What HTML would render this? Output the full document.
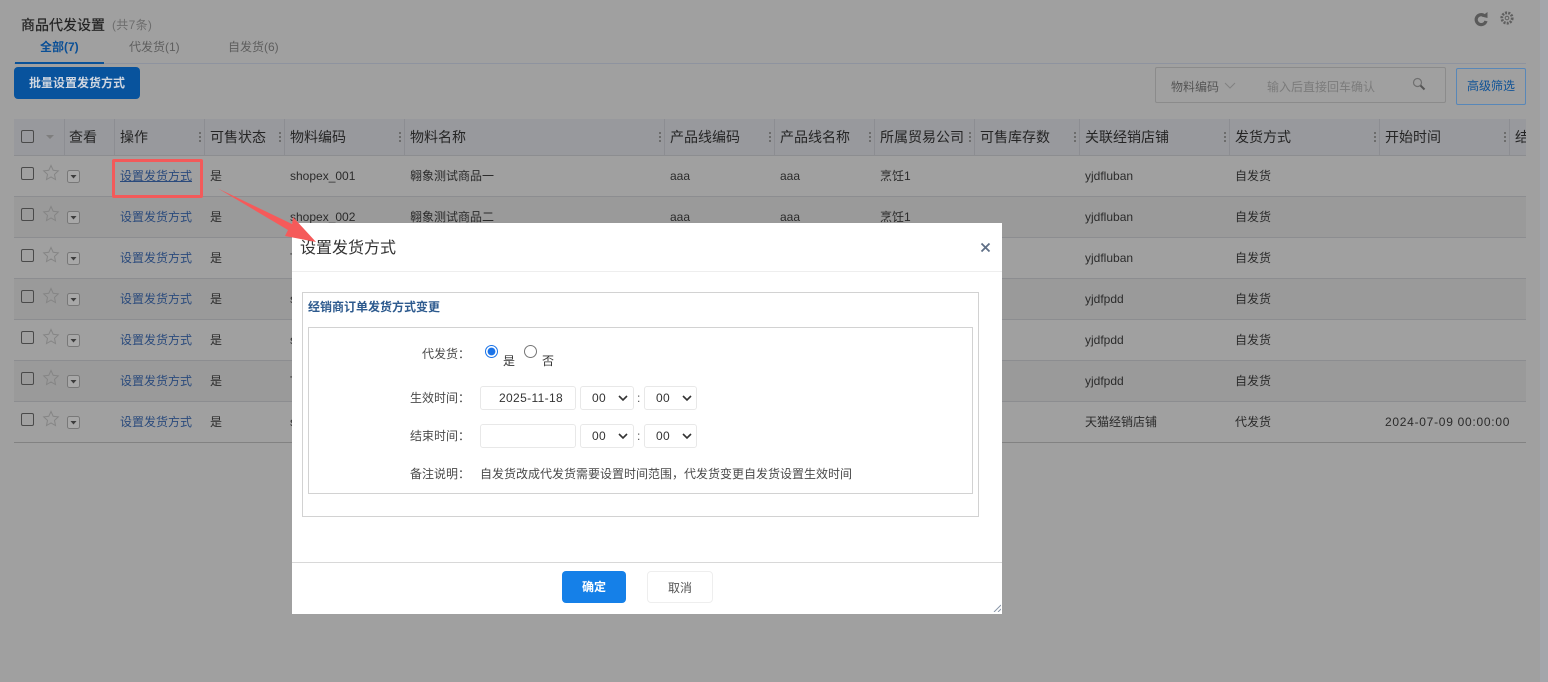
<!DOCTYPE html>
<html lang="zh">
<head>
<meta charset="utf-8">
<title>商品代发设置</title>
<style>
html,body{margin:0;padding:0}
body{width:1548px;height:682px;overflow:hidden;position:relative;background:#a0a0a0;font-family:"Liberation Sans","Noto Sans CJK SC",sans-serif;font-size:12px;color:#2b2b2b}
.a{position:absolute;white-space:nowrap}
.row{position:absolute;left:14px;width:1512px;height:40px;border-bottom:1px solid #8c8d90;line-height:41px;overflow:hidden}
.row.e{background:#9a9a9a}
.row span{position:absolute;top:0;white-space:nowrap}
.row .l{left:106px;color:#2a4a7c}
.row .s{left:196px}.row .c{left:276px}.row .n{left:396px}.row .p1{left:656px}.row .p2{left:766px}.row .t{left:866px}.row .d{left:1071px}.row .m{left:1221px}
.row i.cb{position:absolute;left:7px;top:11px;width:11px;height:11px;border:1px solid #4a4a4a;border-radius:2px}
.row svg{position:absolute}
.th{position:absolute;top:119px;height:36px;line-height:36px;font-size:14px;color:#252525;white-space:nowrap}
.sep{position:absolute;top:119px;width:1px;height:36px;background:#8c8d92}
.dots{position:absolute;top:132px;width:2px;height:2px;background:#6c6c6c;box-shadow:0 4px 0 #6c6c6c,0 8px 0 #6c6c6c}
.lab{position:absolute;right:532px;white-space:nowrap;color:#4a4a4a}
.inp{position:absolute;box-sizing:border-box;height:24px;border:1px solid #e8e8e8;border-radius:3px;background:#fff;color:#333;line-height:22px;font-size:12px}
.arrowd{position:absolute}
</style>
</head>
<body>
<div class="a" style="left:1540px;top:0;width:8px;height:682px;background:#a4a6ab"></div>

<div class="a" style="left:21px;top:15px;font-size:14px;color:#222;-webkit-text-stroke:.2px #222">商品代发设置</div>
<div class="a" style="left:112px;top:16px;color:#6d6d6d;letter-spacing:.3px">(共7条)</div>
<div class="a" style="left:40px;top:38px;color:#0a4f96;font-weight:bold">全部(7)</div>
<div class="a" style="left:129px;top:38px;color:#5e5e5e">代发货(1)</div>
<div class="a" style="left:228px;top:38px;color:#5e5e5e">自发货(6)</div>
<div class="a" style="left:14px;top:63px;width:1512px;height:1px;background:#8e939f"></div>
<div class="a" style="left:15px;top:62px;width:89px;height:2px;background:#0a5299"></div>

<svg class="a" style="left:1472px;top:10px" width="18" height="18" viewBox="0 0 18 18"><path d="M12 5.500A5 5 0 1 0 14 11" fill="none" stroke="#5a5a5a" stroke-width="3.200"/><path d="M9.500 6.500L15.500 2V8z" fill="#5a5a5a"/></svg>
<svg class="a" style="left:1499px;top:10px" width="16" height="16" viewBox="0 0 16 16"><circle cx="8" cy="8" r="5.200" fill="none" stroke="#5f5f5f" stroke-width="2.800" stroke-dasharray="2 1.200"/><circle cx="8" cy="8" r="1.800" fill="none" stroke="#5f5f5f"/></svg>

<div class="a" style="left:14px;top:67px;width:126px;height:32px;background:#08539d;border-radius:4px;color:#cfd6e0;text-align:center;line-height:32px;font-weight:bold">批量设置发货方式</div>

<div class="a" style="left:1155px;top:67px;width:289px;height:34px;border:1px solid #8b8b8b;border-radius:2px"></div>
<div class="a" style="left:1171px;top:78px;color:#555">物料编码</div>
<svg class="a" style="left:1224px;top:82px" width="12" height="8" viewBox="0 0 12 8"><path d="M1 1l5 5 5-5" fill="none" stroke="#818181"/></svg>
<div class="a" style="left:1267px;top:78px;color:#7b7b7b">输入后直接回车确认</div>
<svg class="a" style="left:1412px;top:77px" width="14" height="14" viewBox="0 0 14 14"><circle cx="5.500" cy="5.500" r="4" fill="none" stroke="#6f6f6f" stroke-width="1.200"/><path d="M8.500 8.500l4 4" stroke="#555" stroke-width="2"/></svg>
<div class="a" style="left:1456px;top:68px;width:68px;height:35px;border:1px solid #5887b8;border-radius:2px;color:#0f5296;text-align:center;line-height:35px">高级筛选</div>

<div class="a" style="left:14px;top:119px;width:1512px;height:36px;background:#98999d;border-bottom:1px solid #8c8d90;box-sizing:content-box"></div>
<i class="a" style="left:21px;top:130px;width:11px;height:11px;border:1px solid #4a4a4a;border-radius:2px"></i>
<svg class="a" style="left:45px;top:134px" width="10" height="6"><path d="M1 1h8l-4 4z" fill="#7e7e7e"/></svg>
<div class="sep" style="left:64px"></div><div class="sep" style="left:114px"></div><div class="sep" style="left:204px"></div><div class="sep" style="left:284px"></div><div class="sep" style="left:404px"></div><div class="sep" style="left:664px"></div><div class="sep" style="left:774px"></div><div class="sep" style="left:874px"></div><div class="sep" style="left:974px"></div><div class="sep" style="left:1079px"></div><div class="sep" style="left:1229px"></div><div class="sep" style="left:1379px"></div><div class="sep" style="left:1509px"></div>
<div class="dots" style="left:199px"></div><div class="dots" style="left:279px"></div><div class="dots" style="left:399px"></div><div class="dots" style="left:659px"></div><div class="dots" style="left:769px"></div><div class="dots" style="left:869px"></div><div class="dots" style="left:969px"></div><div class="dots" style="left:1074px"></div><div class="dots" style="left:1224px"></div><div class="dots" style="left:1374px"></div><div class="dots" style="left:1504px"></div>
<div class="th" style="left:69px">查看</div>
<div class="th" style="left:120px">操作</div>
<div class="th" style="left:210px">可售状态</div>
<div class="th" style="left:290px">物料编码</div>
<div class="th" style="left:410px">物料名称</div>
<div class="th" style="left:670px">产品线编码</div>
<div class="th" style="left:780px">产品线名称</div>
<div class="th" style="left:880px">所属贸易公司</div>
<div class="th" style="left:980px">可售库存数</div>
<div class="th" style="left:1085px">关联经销店铺</div>
<div class="th" style="left:1235px">发货方式</div>
<div class="th" style="left:1385px">开始时间</div>
<div class="th" style="left:1515px;width:11px;overflow:hidden">结束时间</div>

<div class="row" style="top:156px"><i class="cb"></i><svg style="left:28px;top:8px" width="18" height="18" viewBox="0 0 18 18"><path d="M9 1.500l2.200 4.800 5.100.6-3.800 3.500 1 5.100L9 13l-4.500 2.500 1-5.100L1.700 6.900l5.100-.6z" fill="none" stroke="#858585"/></svg><svg style="left:53px;top:14px" width="14" height="14"><rect x=".5" y=".5" width="12" height="12" rx="2" fill="#a8a8a8" stroke="#787878"/><path d="M3.500 5h6l-3 3.500z" fill="#3d3d3d"/></svg><span class="l" style="text-decoration:underline">设置发货方式</span><span class="s">是</span><span class="c">shopex_001</span><span class="n">翱象测试商品一</span><span class="p1">aaa</span><span class="p2">aaa</span><span class="t">烹饪1</span><span class="d">yjdfluban</span><span class="m">自发货</span></div>
<div class="row e" style="top:197px"><i class="cb"></i><svg style="left:28px;top:8px" width="18" height="18" viewBox="0 0 18 18"><path d="M9 1.500l2.200 4.800 5.100.6-3.800 3.500 1 5.100L9 13l-4.500 2.500 1-5.100L1.700 6.900l5.100-.6z" fill="none" stroke="#858585"/></svg><svg style="left:53px;top:14px" width="14" height="14"><rect x=".5" y=".5" width="12" height="12" rx="2" fill="#a8a8a8" stroke="#787878"/><path d="M3.500 5h6l-3 3.500z" fill="#3d3d3d"/></svg><span class="l">设置发货方式</span><span class="s">是</span><span class="c">shopex_002</span><span class="n">翱象测试商品二</span><span class="p1">aaa</span><span class="p2">aaa</span><span class="t">烹饪1</span><span class="d">yjdfluban</span><span class="m">自发货</span></div>
<div class="row" style="top:238px"><i class="cb"></i><svg style="left:28px;top:8px" width="18" height="18" viewBox="0 0 18 18"><path d="M9 1.500l2.200 4.800 5.100.6-3.800 3.500 1 5.100L9 13l-4.500 2.500 1-5.100L1.700 6.900l5.100-.6z" fill="none" stroke="#858585"/></svg><svg style="left:53px;top:14px" width="14" height="14"><rect x=".5" y=".5" width="12" height="12" rx="2" fill="#a8a8a8" stroke="#787878"/><path d="M3.500 5h6l-3 3.500z" fill="#3d3d3d"/></svg><span class="l">设置发货方式</span><span class="s">是</span><span class="c">T</span><span class="d">yjdfluban</span><span class="m">自发货</span></div>
<div class="row e" style="top:279px"><i class="cb"></i><svg style="left:28px;top:8px" width="18" height="18" viewBox="0 0 18 18"><path d="M9 1.500l2.200 4.800 5.100.6-3.800 3.500 1 5.100L9 13l-4.500 2.500 1-5.100L1.700 6.900l5.100-.6z" fill="none" stroke="#858585"/></svg><svg style="left:53px;top:14px" width="14" height="14"><rect x=".5" y=".5" width="12" height="12" rx="2" fill="#a8a8a8" stroke="#787878"/><path d="M3.500 5h6l-3 3.500z" fill="#3d3d3d"/></svg><span class="l">设置发货方式</span><span class="s">是</span><span class="c">s</span><span class="d">yjdfpdd</span><span class="m">自发货</span></div>
<div class="row" style="top:320px"><i class="cb"></i><svg style="left:28px;top:8px" width="18" height="18" viewBox="0 0 18 18"><path d="M9 1.500l2.200 4.800 5.100.6-3.800 3.500 1 5.100L9 13l-4.500 2.500 1-5.100L1.700 6.900l5.100-.6z" fill="none" stroke="#858585"/></svg><svg style="left:53px;top:14px" width="14" height="14"><rect x=".5" y=".5" width="12" height="12" rx="2" fill="#a8a8a8" stroke="#787878"/><path d="M3.500 5h6l-3 3.500z" fill="#3d3d3d"/></svg><span class="l">设置发货方式</span><span class="s">是</span><span class="c">s</span><span class="d">yjdfpdd</span><span class="m">自发货</span></div>
<div class="row e" style="top:361px"><i class="cb"></i><svg style="left:28px;top:8px" width="18" height="18" viewBox="0 0 18 18"><path d="M9 1.500l2.200 4.800 5.100.6-3.800 3.500 1 5.100L9 13l-4.500 2.500 1-5.100L1.700 6.900l5.100-.6z" fill="none" stroke="#858585"/></svg><svg style="left:53px;top:14px" width="14" height="14"><rect x=".5" y=".5" width="12" height="12" rx="2" fill="#a8a8a8" stroke="#787878"/><path d="M3.500 5h6l-3 3.500z" fill="#3d3d3d"/></svg><span class="l">设置发货方式</span><span class="s">是</span><span class="c">T</span><span class="d">yjdfpdd</span><span class="m">自发货</span></div>
<div class="row" style="top:402px;border-bottom-color:#828282"><i class="cb"></i><svg style="left:28px;top:8px" width="18" height="18" viewBox="0 0 18 18"><path d="M9 1.500l2.200 4.800 5.100.6-3.800 3.500 1 5.100L9 13l-4.500 2.500 1-5.100L1.700 6.900l5.100-.6z" fill="none" stroke="#858585"/></svg><svg style="left:53px;top:14px" width="14" height="14"><rect x=".5" y=".5" width="12" height="12" rx="2" fill="#a8a8a8" stroke="#787878"/><path d="M3.500 5h6l-3 3.500z" fill="#3d3d3d"/></svg><span class="l">设置发货方式</span><span class="s">是</span><span class="c">s</span><span class="d">天猫经销店铺</span><span class="m">代发货</span><span style="left:1371px;width:124px;overflow:hidden;letter-spacing:.72px">2024-07-09 00:00:00</span></div>

<div class="a" style="left:112px;top:159px;width:85px;height:33px;border:3px solid #f35a5a;border-radius:2px"></div>

<div class="a" style="left:292px;top:223px;width:710px;height:391px;background:#fff">
  <div class="a" style="left:8px;top:13px;font-size:16px;line-height:22px;color:#333;margin-top:2px">设置发货方式</div>
  <svg class="a" style="left:688px;top:19px" width="11" height="11" viewBox="0 0 11 11"><path d="M1.500 1.500l8 8M9.500 1.500l-8 8" stroke="#5f6f86" stroke-width="1.800"/></svg>
  <div class="a" style="left:0;top:48px;width:710px;height:1px;background:#eee"></div>

  <div class="a" style="left:10px;top:69px;width:675px;height:223px;border:1px solid #d2d2d2"></div>
  <div class="a" style="left:16px;top:75px;font-weight:bold;color:#2d5a8e">经销商订单发货方式变更</div>
  <div class="a" style="left:16px;top:104px;width:663px;height:165px;border:1px solid #d2d2d2"></div>

  <div class="lab" style="top:122px">代发货：</div>
  <input class="a" type="radio" checked style="left:193px;top:122px;margin:0;accent-color:#1a73e8">
  <div class="a" style="left:211px;top:129px;color:#333">是</div>
  <input class="a" type="radio" style="left:232px;top:122px;margin:0">
  <div class="a" style="left:250px;top:129px;color:#333">否</div>

  <div class="lab" style="top:166px">生效时间：</div>
  <div class="inp" style="left:188px;top:163px;width:96px;text-align:right;padding-right:12px;letter-spacing:.35px">2025-11-18</div>
  <div class="inp" style="left:288px;top:163px;width:54px;padding-left:11px;letter-spacing:.3px">00<svg class="arrowd" style="left:37px;top:8px" width="10" height="7"><path d="M1 1l4 4 4-4" fill="none" stroke="#333" stroke-width="1.600"/></svg></div>
  <div class="a" style="left:345px;top:168px;color:#555">:</div>
  <div class="inp" style="left:352px;top:163px;width:53px;padding-left:11px;letter-spacing:.3px">00<svg class="arrowd" style="left:37px;top:8px" width="10" height="7"><path d="M1 1l4 4 4-4" fill="none" stroke="#333" stroke-width="1.600"/></svg></div>

  <div class="lab" style="top:204px">结束时间：</div>
  <div class="inp" style="left:188px;top:201px;width:96px"></div>
  <div class="inp" style="left:288px;top:201px;width:54px;padding-left:11px;letter-spacing:.3px">00<svg class="arrowd" style="left:37px;top:8px" width="10" height="7"><path d="M1 1l4 4 4-4" fill="none" stroke="#333" stroke-width="1.600"/></svg></div>
  <div class="a" style="left:345px;top:206px;color:#555">:</div>
  <div class="inp" style="left:352px;top:201px;width:53px;padding-left:11px;letter-spacing:.3px">00<svg class="arrowd" style="left:37px;top:8px" width="10" height="7"><path d="M1 1l4 4 4-4" fill="none" stroke="#333" stroke-width="1.600"/></svg></div>

  <div class="lab" style="top:242px">备注说明：</div>
  <div class="a" style="left:188px;top:242px;color:#4a4a4a">自发货改成代发货需要设置时间范围，代发货变更自发货设置生效时间</div>

  <div class="a" style="left:0;top:339px;width:710px;height:1px;background:#d8d8d8"></div>
  <div class="a" style="left:270px;top:348px;width:64px;height:32px;background:#1580e8;border-radius:4px;color:#fff;font-weight:bold;text-align:center;line-height:32px">确定</div>
  <div class="a" style="left:355px;top:348px;width:64px;height:30px;border:1px solid #eee;border-radius:4px;color:#555;text-align:center;line-height:32px">取消</div>
  <svg class="a" style="left:701px;top:381px" width="8" height="8"><path d="M1 8l7-7M5 8l3-3" stroke="#8a96a8"/></svg>
</div>

<svg class="a" style="left:0;top:0" width="400" height="300"><polygon points="218,188.500 292,224 293,217 316,242 285,236 288,230" fill="#f55a5a"/></svg>
</body>
</html>
